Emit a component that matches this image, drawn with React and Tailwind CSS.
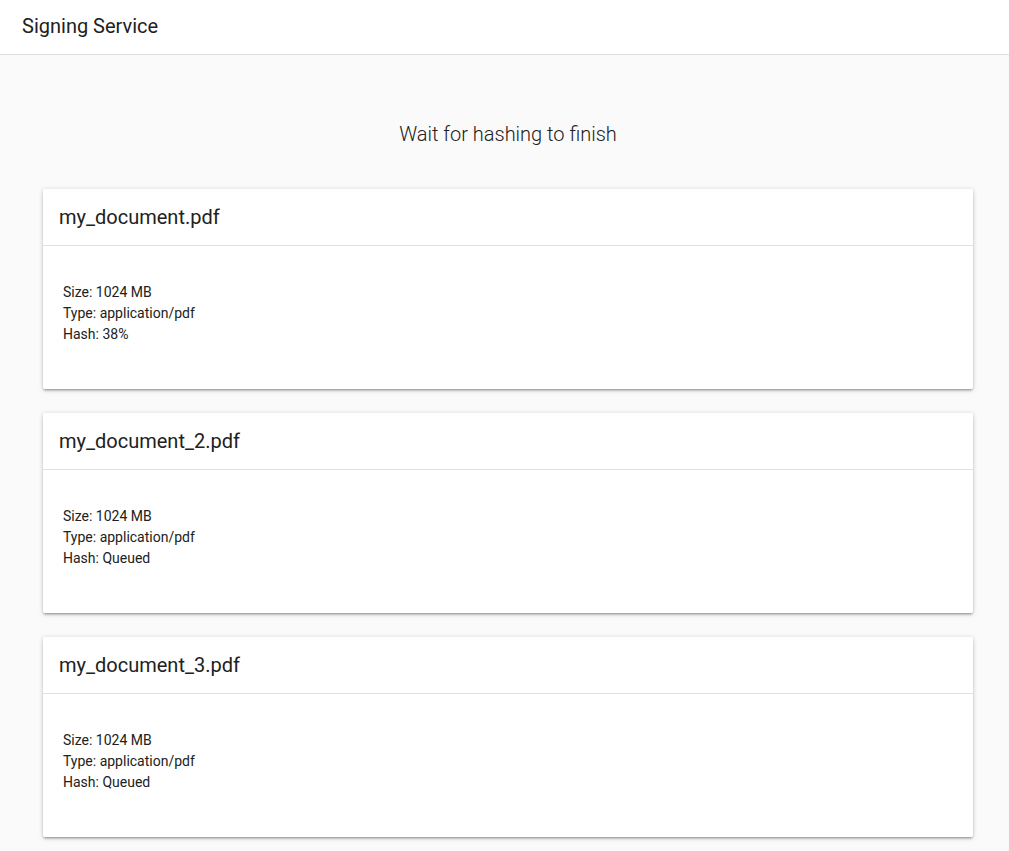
import React from "react";

const files = [
  { name: "my_document.pdf", size: "1024 MB", type: "application/pdf", hash: "38%" },
  { name: "my_document_2.pdf", size: "1024 MB", type: "application/pdf", hash: "Queued" },
  { name: "my_document_3.pdf", size: "1024 MB", type: "application/pdf", hash: "Queued" },
];

const FileCard = ({ file }) => (
  <div className="bg-white rounded-[2px] shadow-[0_2px_2px_0_rgba(0,0,0,0.14),0_3px_1px_-2px_rgba(0,0,0,0.12),0_1px_5px_0_rgba(0,0,0,0.2)]">
    <div className="h-[57px] px-4 pb-[1px] flex items-center border-b border-[#e0e0e0]">
      <h2 className="text-[20px] text-[#212121]">{file.name}</h2>
    </div>
    <div className="h-[143px] pl-5 pt-[36px] text-[14px] leading-[21px] text-[#212121]">
      <div>Size: {file.size}</div>
      <div>Type: {file.type}</div>
      <div>Hash: {file.hash}</div>
    </div>
  </div>
);

export default function App() {
  return (
    <div className="min-h-screen bg-[#fafafa] font-['Roboto',sans-serif]">
      <header className="h-[55px] bg-white border-b border-[#e0e0e0] flex items-center px-[22px] pb-[2px]">
        <h1 className="text-[20px] text-[#212121]">Signing Service</h1>
      </header>
      <main className="pl-[43px] pr-[36px] pb-6">
        <p className="text-center text-[20px] font-light text-[#212121] pt-[65px] pb-[41px] leading-[28px]">
          Wait for hashing to finish
        </p>
        <div className="flex flex-col gap-[24px]">
          {files.map((f) => (
            <FileCard key={f.name} file={f} />
          ))}
        </div>
      </main>
    </div>
  );
}
